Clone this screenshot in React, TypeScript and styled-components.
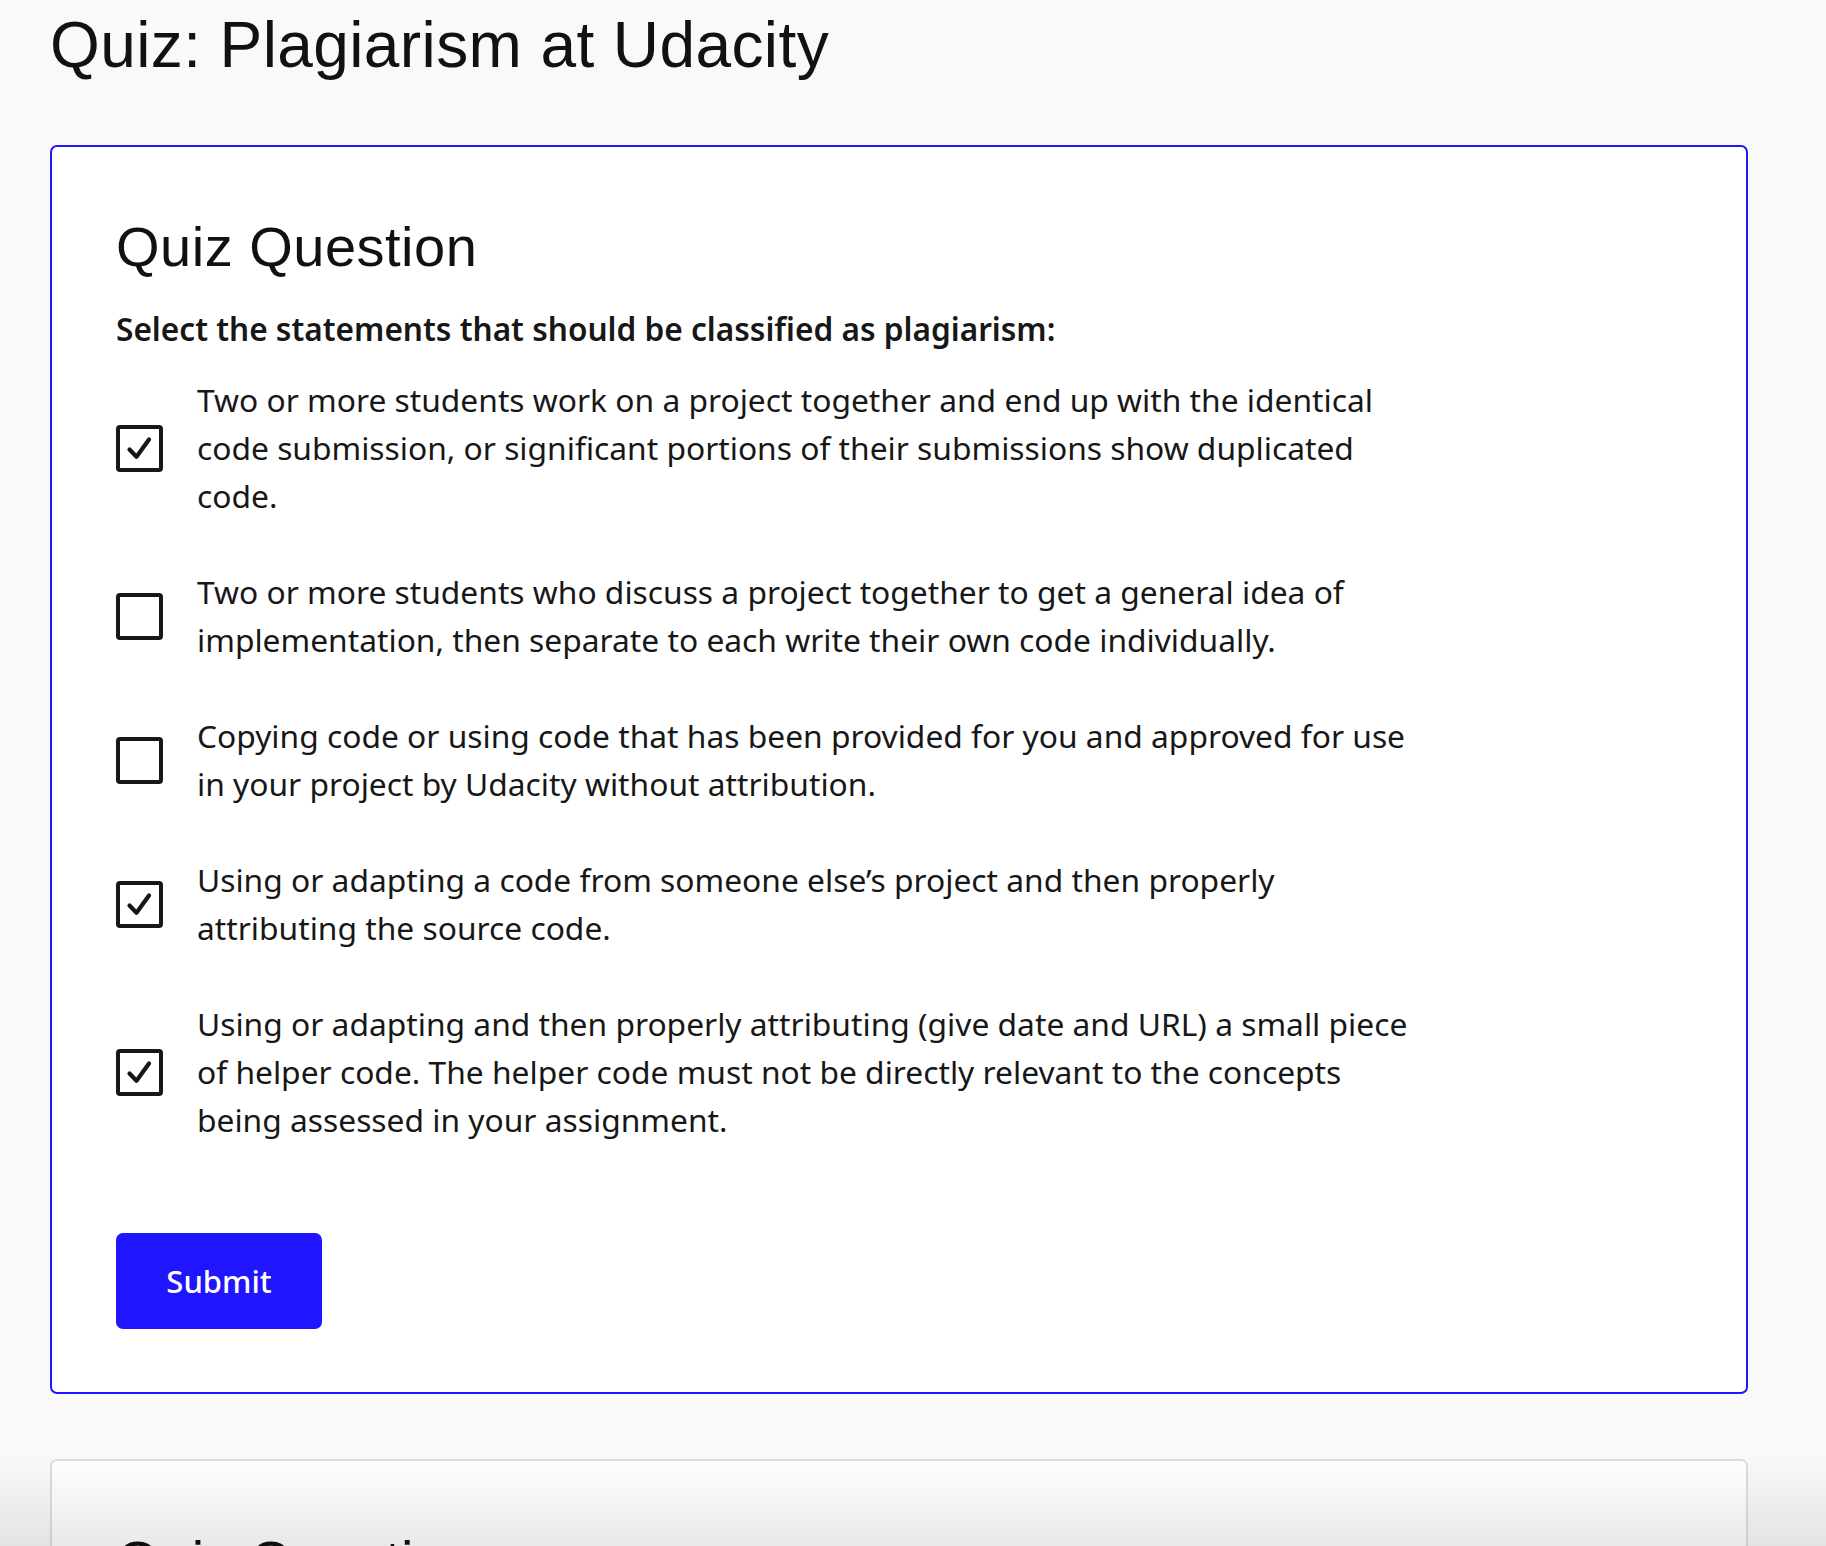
import React from "react";
import styled, { createGlobalStyle } from "styled-components";

const GlobalStyle = createGlobalStyle`
    html, body {
        margin: 0;
        padding: 0;
        background-color: #f9f9f9;
        color: #171717;
    }
`;

type Statement = {
    text: string;
    checked: boolean;
};

const statements: Statement[] = [
    {
        text: "Two or more students work on a project together and end up with the identical code submission, or significant portions of their submissions show duplicated code.",
        checked: true,
    },
    {
        text: "Two or more students who discuss a project together to get a general idea of implementation, then separate to each write their own code individually.",
        checked: false,
    },
    {
        text: "Copying code or using code that has been provided for you and approved for use in your project by Udacity without attribution.",
        checked: false,
    },
    {
        text: "Using or adapting a code from someone else\u2019s project and then properly attributing the source code.",
        checked: true,
    },
    {
        text: "Using or adapting and then properly attributing (give date and URL) a small piece of helper code. The helper code must not be directly relevant to the concepts being assessed in your assignment.",
        checked: true,
    },
];

const CheckMark: React.FC = () => (
    <svg width="39" height="39" viewBox="0 0 39 39" fill="none">
        <path d="M9.5 20.5 L16.5 27.8 L29 10.5" stroke="#171717" strokeWidth="4.2" strokeLinecap="round" strokeLinejoin="round" />
    </svg>
);

export default function App() {
    return (
        <SPage>
            <GlobalStyle />
            <SPageTitle>Quiz: Plagiarism at Udacity</SPageTitle>
            <SCard $active>
                <SCardTitle>Quiz Question</SCardTitle>
                <SPrompt>Select the statements that should be classified as plagiarism:</SPrompt>
                <SList>
                    {statements.map((s, i) => (
                        <SOption key={i}>
                            <SBox>{s.checked && <CheckMark />}</SBox>
                            <SOptionText>{s.text}</SOptionText>
                        </SOption>
                    ))}
                </SList>
                <SSubmit type="button">Submit</SSubmit>
            </SCard>
            <SCard>
                <SCardTitle>Quiz Question</SCardTitle>
                <SPrompt>Select the statements that should be classified as plagiarism:</SPrompt>
            </SCard>
            <SBottomFade />
        </SPage>
    );
}

const SPage = styled.div`
    padding: 7px 78px 80px 50px;
    display: flex;
    flex-direction: column;
`;

const SPageTitle = styled.h1`
    margin: 0 0 62px;
    font-family: "Liberation Sans", Arial, sans-serif;
    font-weight: 400;
    font-size: 64px;
    line-height: 76px;
    letter-spacing: 0.4px;
    color: #111;
`;

const SCard = styled.section<{ $active?: boolean }>`
    background-color: #fff;
    border: 2px solid ${(p) => (p.$active ? "#2015ff" : "#dedede")};
    border-radius: 7px;
    padding: 66px 64px 63px;
    margin-bottom: 65px;
    display: flex;
    flex-direction: column;
    align-items: flex-start;
`;

const SCardTitle = styled.h2`
    margin: 0 0 25px;
    font-family: "Liberation Sans", Arial, sans-serif;
    font-weight: 400;
    font-size: 56px;
    line-height: 67px;
    letter-spacing: 0.5px;
    color: #111;
`;

const SPrompt = styled.p`
    margin: 0 0 23px;
    font-family: "Noto Sans", "Open Sans", sans-serif;
    font-weight: 600;
    font-size: 31.6px;
    line-height: 48px;
`;

const SList = styled.div`
    display: flex;
    flex-direction: column;
    gap: 48px;
    margin-bottom: 89px;
`;

const SOption = styled.label`
    display: grid;
    grid-template-columns: 47px 1222px;
    column-gap: 34px;
    align-items: center;
    cursor: pointer;
`;

const SBox = styled.span`
    width: 47px;
    height: 47px;
    box-sizing: border-box;
    border: 4px solid #171717;
    border-radius: 4px;
    display: flex;
    align-items: center;
    justify-content: center;
`;

const SOptionText = styled.span`
    font-family: "Noto Sans", "Open Sans", sans-serif;
    font-size: 31.75px;
    line-height: 48px;
    color: #171717;
`;

const SSubmit = styled.button`
    width: 206px;
    height: 96px;
    border: none;
    border-radius: 7px;
    background-color: #2015ff;
    color: #fff;
    font-family: "Noto Sans", "Open Sans", sans-serif;
    font-weight: 500;
    font-size: 31px;
    cursor: pointer;
`;

const SBottomFade = styled.div`
    position: fixed;
    left: 0;
    right: 0;
    bottom: 0;
    height: 90px;
    pointer-events: none;
    background: linear-gradient(to bottom, rgba(0, 0, 0, 0), rgba(0, 0, 0, 0.085));
`;
